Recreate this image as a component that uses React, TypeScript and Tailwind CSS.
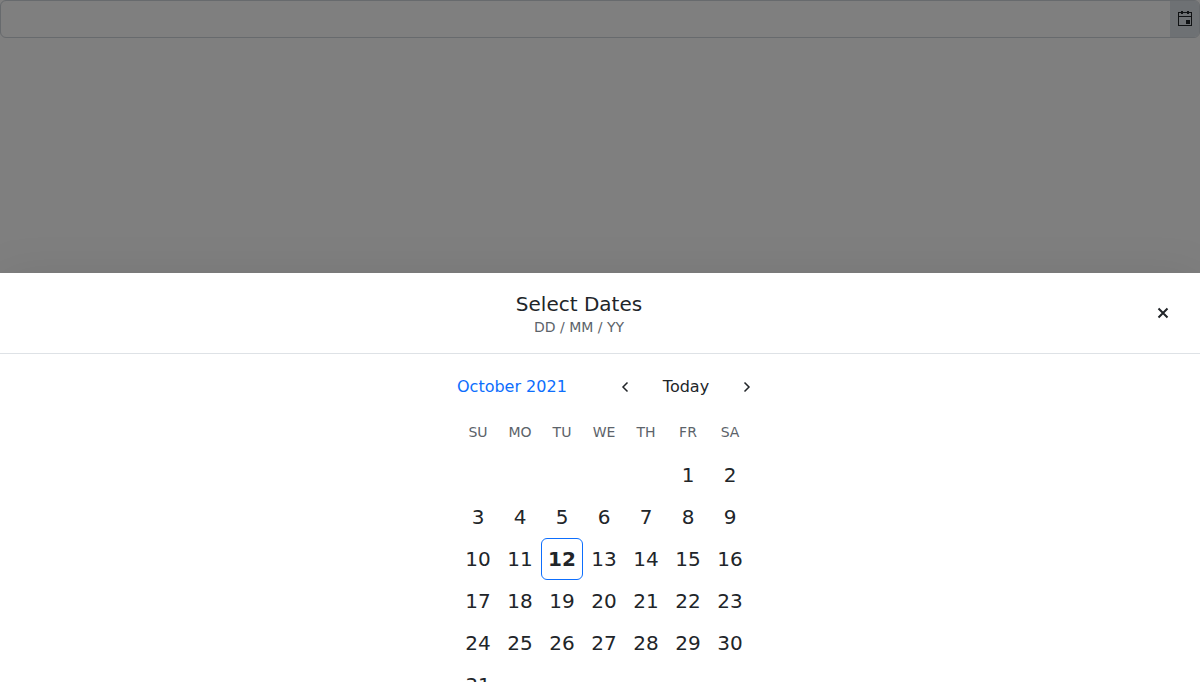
const font = "font-['DejaVu_Sans',sans-serif]";
const days = ['SU', 'MO', 'TU', 'WE', 'TH', 'FR', 'SA'];
const cells: (number | null)[] = [null, null, null, null, null, ...Array.from({ length: 31 }, (_, i) => i + 1)];

export default function App() {
  return (
    <div className={`flex h-[682px] w-[1200px] flex-col overflow-hidden bg-[#7f7f7f] text-[#212529] ${font}`}>
      <div className="flex h-[38px] shrink-0 overflow-hidden rounded-[6px] border border-[#676a6d]">
        <div className="flex-1" />
        <button className="flex w-[29px] items-center justify-center bg-[#6e7174] pb-0.5" aria-label="Open calendar">
          <svg width="16" height="16" viewBox="0 0 16 16" fill="#101214">
            <path fillRule="evenodd" d="M1 2h14v14H1zM2 3v3h12V3zM2 7v8h12V7z" />
            <path d="M4 1h2v3H4zM10 1h2v3h-2zM9 10h4v4H9z" />
          </svg>
        </button>
      </div>
      <div className="h-[235px] shrink-0" />
      <div className="flex h-[500px] shrink-0 flex-col bg-white shadow-[0_8px_48px_rgba(0,0,0,0.1)]">
        <div className="flex h-[81px] shrink-0 items-center border-b border-[#dee2e6] px-4">
          <div className="flex flex-1 flex-col items-center pt-1 text-center">
            <div className="text-[20px] leading-[25px]">Select Dates</div>
            <div className="text-[14px] leading-[21px] text-[#5c636a]">DD / MM / YY</div>
          </div>
          <button className="flex h-[42px] w-[42px] items-center justify-center" aria-label="Close">
            <svg width="20" height="20" viewBox="0 0 20 20" fill="none" stroke="#212529" strokeWidth="2">
              <path d="M5.500 5.500l9 9M14.500 5.500l-9 9" />
            </svg>
          </button>
        </div>
        <div className="mx-auto flex w-[294px] translate-x-1 flex-col pt-[14px]">
          <div className="flex h-[38px] items-center text-[16px]">
            <span className="w-[158px] shrink-0 text-[#0d6efd]">October 2021</span>
            <svg className="shrink-0" width="20" height="20" viewBox="0 0 20 20" fill="none" stroke="#212529" strokeWidth="1.5"><path d="M12.500 5.500L8 10l4.500 4.500" /></svg>
            <span className="w-[102px] shrink-0 text-center">Today</span>
            <svg className="shrink-0" width="20" height="20" viewBox="0 0 20 20" fill="none" stroke="#212529" strokeWidth="1.5"><path d="M7.500 5.500l4.500 4.500-4.500 4.500" /></svg>
          </div>
          <div className="mt-[5px] grid h-[43px] grid-cols-7 items-center text-center text-[14px] text-[#5c636a]">
            {days.map((d) => <span key={d}>{d}</span>)}
          </div>
          <div className="grid grid-cols-7 text-center text-[20px]">
            {cells.map((n, i) => (
              <span key={i} className={n === 12 ? 'flex h-[42px] items-center justify-center rounded-[6px] border border-[#0d6efd] font-bold' : 'flex h-[42px] items-center justify-center'}>{n}</span>
            ))}
          </div>
        </div>
      </div>
    </div>
  );
}
